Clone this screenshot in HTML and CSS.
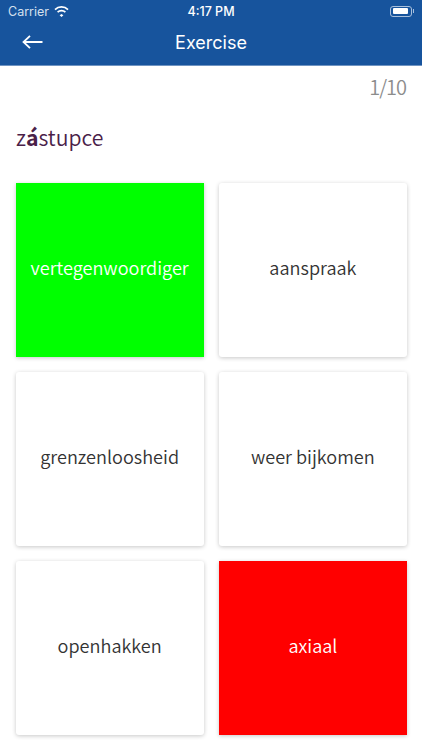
FILE: index.html
```html
<html lang="en">
<head>
  <meta charset="UTF-8">
  <meta name="viewport" content="width=device-width, initial-scale=1.0">
  <title>Exercise</title>
  <link rel="stylesheet" href="styles.css">
</head>
<body>
  <header class="header">
    <div class="status-bar">
      <div class="status-left">
        <span>Carrier</span>
        <svg class="wifi" width="15" height="11" viewBox="0 0 15 11">
          <path d="M7.5 8 L9.4 9.2 L7.5 11 L5.6 9.2 Z" fill="#fff"/>
          <path d="M3.6 6.2 A5.6 5.6 0 0 1 11.4 6.2" fill="none" stroke="#fff" stroke-width="1.7"/>
          <path d="M1 3.6 A9.2 9.2 0 0 1 14 3.6" fill="none" stroke="#fff" stroke-width="1.7"/>
        </svg>
      </div>
      <div class="status-time">4:17 PM</div>
      <div class="status-right">
        <div class="battery"><div class="battery-level"></div></div>
        <div class="battery-cap"></div>
      </div>
    </div>
    <div class="nav-bar">
      <svg class="back" width="21" height="14" viewBox="0 0 21 14">
        <path d="M20.5 7 H1.5 M8 0.8 L1.5 7 L8 13.2" fill="none" stroke="#fff" stroke-width="1.8"/>
      </svg>
      <h1>Exercise</h1>
    </div>
  </header>

  <main class="content">
    <div class="counter">1/10</div>
    <div class="word">z<b>á</b>stupce</div>
    <div class="answers">
      <div class="card correct">vertegenwoordiger</div>
      <div class="card">aanspraak</div>
      <div class="card">grenzenloosheid</div>
      <div class="card">weer bijkomen</div>
      <div class="card">openhakken</div>
      <div class="card wrong">axiaal</div>
    </div>
  </main>
</body>
</html>
```

FILE: styles.css
```css
body {
  margin: 0;
  background-color: #fff;
  color: #333;
  font-family: "Noto Sans CJK KR", "Noto Sans", sans-serif;
}

.header {
  height: 66px;
  background-color: #17549d;
  color: #fff;
  border-bottom: 1px solid #6f94c2;
  box-sizing: border-box;
}

.status-bar {
  height: 22px;
  padding: 0 8px;
  display: grid;
  grid-template-columns: 1fr auto 1fr;
  align-items: center;
  font-family: Inter, "Liberation Sans", sans-serif;
  font-size: 12.5px;
}

.status-left {
  display: flex;
  align-items: center;
  gap: 5px;
  color: #d5e0ee;
}

.status-time {
  font-weight: 500;
}

.status-right {
  display: flex;
  justify-content: flex-end;
  align-items: center;
  gap: 1px;
}

.battery {
  width: 22px;
  height: 11px;
  padding: 1.5px;
  box-sizing: border-box;
  border: 1px solid #a9c0dc;
  border-radius: 3px;
}

.battery-level {
  width: 15px;
  height: 100%;
  background-color: #fff;
  border-radius: 1px;
}

.battery-cap {
  width: 1px;
  height: 4px;
  background-color: #a9c0dc;
}

.nav-bar {
  height: 41px;
  display: flex;
  align-items: center;
  justify-content: center;
  position: relative;
}

.back {
  position: absolute;
  left: 22px;
  top: 13px;
}

.nav-bar h1 {
  margin: 0;
  font-family: Inter, "Liberation Sans", sans-serif;
  font-size: 18px;
  font-weight: 400;
}

.content {
  padding: 0 15px 0 15.5px;
}

.counter {
  padding-top: 6px;
  padding-right: 1px;
  text-align: right;
  color: #8c8c8c;
  font-size: 20px;
  font-weight: 350;
  letter-spacing: -1px;
  line-height: 30px;
}

.word {
  margin-top: 21px;
  color: #4a2148;
  font-size: 21.2px;
  font-weight: 350;
  line-height: 28px;
  padding-left: 0.5px;
}

.word b {
  font-weight: 700;
}

.answers {
  margin-top: 32px;
  display: grid;
  grid-template-columns: 1fr 1fr;
  grid-auto-rows: 174px;
  gap: 15px;
}

.card {
  display: flex;
  align-items: center;
  justify-content: center;
  padding-bottom: 6px;
  box-sizing: border-box;
  background: #fff;
  border-radius: 3px;
  box-shadow: 0 1px 4px rgba(0, 0, 0, 0.22);
  font-size: 18.1px;
  font-weight: 350;
}

.correct {
  background-color: #00ff00;
  color: #fff;
  border-radius: 0;
}

.wrong {
  background-color: #ff0000;
  color: #fff;
  border-radius: 0;
}
```
